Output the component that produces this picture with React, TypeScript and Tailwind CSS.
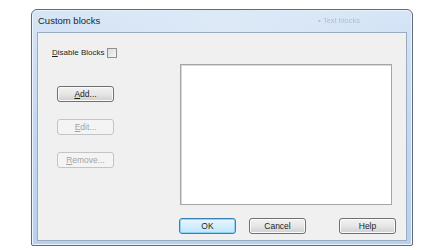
import React from "react";

const font = { fontFamily: '"Liberation Sans", Arial, sans-serif' };

const Button = ({
  label,
  hot,
  disabled,
  focused,
  className = "",
}: {
  label: string;
  hot: number;
  disabled?: boolean;
  focused?: boolean;
  className?: string;
}) => {
  const base = focused
    ? "border-[#3c7fb1] bg-gradient-to-b from-[#eaf6fd] to-[#bee6fd] shadow-[inset_0_0_0_1px_#8ed2f5]"
    : disabled
      ? "border-[#c2c5c8] bg-[#f4f4f4] text-[#a3a3a3]"
      : "border-[#707070] bg-gradient-to-b from-[#f2f2f2] via-[#e6e6e6] to-[#cfcfcf] shadow-[inset_0_0_0_1px_#fbfbfb]";
  return (
    <div
      className={`flex h-[16px] w-[57px] items-center justify-center rounded-[3px] border text-[8.5px] ${base} ${className}`}
    >
      {label.slice(0, hot)}
      {hot < label.length && <span className="underline">{label[hot]}</span>}
      {label.slice(hot + 1)}
    </div>
  );
};

const HotLabel = ({ label, hot }: { label: string; hot: number }) => (
  <>
    {label.slice(0, hot)}
    <span className="underline">{label[hot]}</span>
    {label.slice(hot + 1)}
  </>
);

export default function App() {
  return (
    <div className="h-[250px] w-[443px] bg-white pl-[31px] pt-[9px] text-[#1e1e1e]" style={font}>
      {/* window frame */}
      <div className="flex h-[237px] w-[382px] flex-col rounded-t-[6px] rounded-b-[2px] border border-[#5f6b78] bg-gradient-to-b from-[#d6e5f6] via-[#c3d8f1] to-[#b9d1ee] shadow-[inset_0_0_0_1px_#eef5fd]">
        {/* title bar */}
        <div className="flex h-[22px] items-center justify-between bg-gradient-to-r from-transparent via-[#dde9f7] to-transparent pl-[6px] pr-[52px]">
          <span className="text-[9.5px]">Custom blocks</span>
          <span className="text-[7.5px] text-[#aebfd2] blur-[0.4px]">▪ Text blocks</span>
        </div>

        {/* client area */}
        <div className="mx-[5px] flex h-[209px] border border-[#9aabbf] bg-[#f0f0f0]">
          {/* left column */}
          <div className="flex w-[141px] flex-col pl-[14px] pt-[14px]">
            <div className="flex h-[11px] items-center gap-[3px] text-[8px]">
              <span>
                <HotLabel label="Disable Blocks" hot={0} />
              </span>
              <div className="h-[10px] w-[10px] border border-[#8e8f8f] bg-gradient-to-br from-[#dcdcdc] to-[#f6f6f6]" />
            </div>
            <div className="ml-[5px] mt-[28px] flex flex-col gap-[17px]">
              <Button label="Add..." hot={0} className="w-[56px]" />
              <Button label="Edit..." hot={0} disabled className="w-[56px]" />
              <Button label="Remove..." hot={0} disabled className="w-[56px]" />
            </div>
          </div>

          {/* right column */}
          <div className="flex flex-col pt-[31px]">
            <div className="ml-[1px] h-[141px] w-[212px] border border-[#a5a5a5] bg-white shadow-[inset_1px_1px_0_#d8d8d8]" />
            <div className="mt-[13px] flex">
              <Button label="OK" hot={2} focused />
              <Button label="Cancel" hot={6} className="ml-[13px]" />
              <Button label="Help" hot={4} className="ml-[33px]" />
            </div>
          </div>
        </div>
      </div>
    </div>
  );
}
